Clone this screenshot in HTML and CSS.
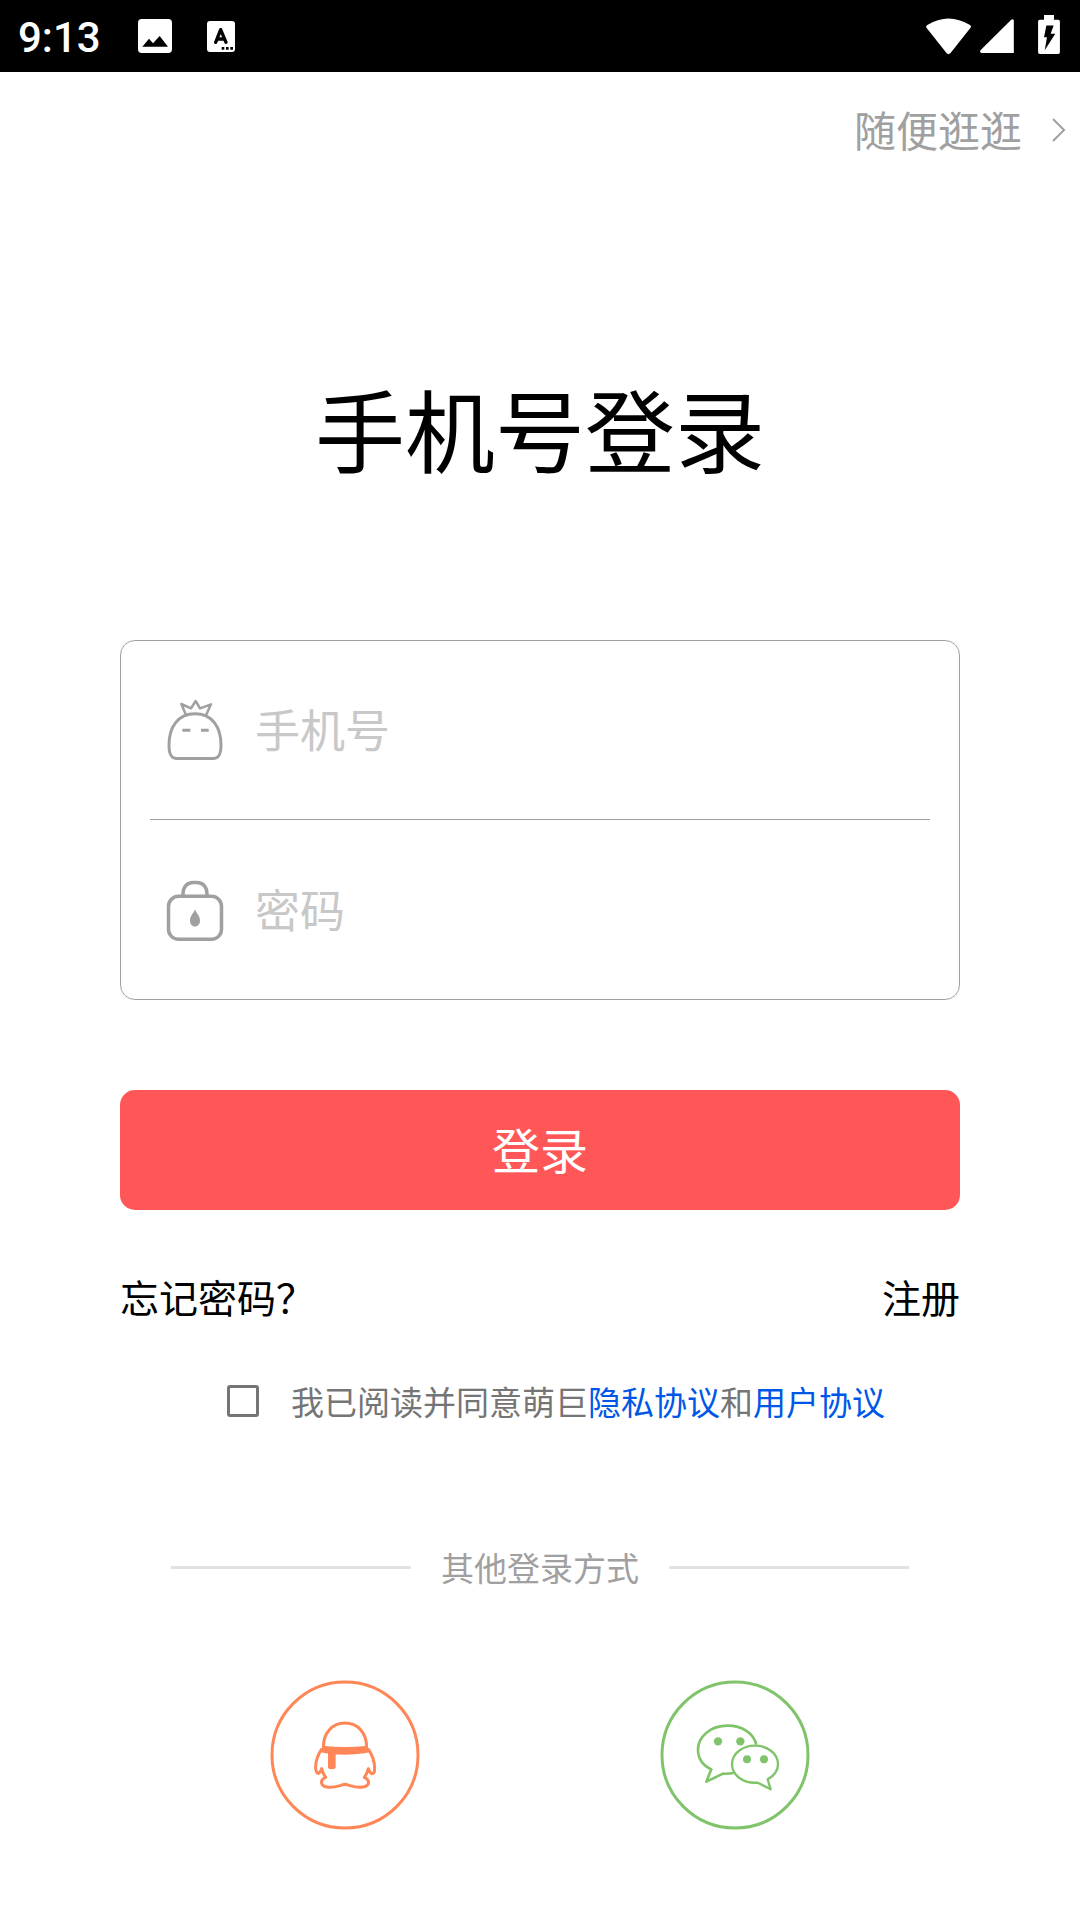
FILE: index.html
```html
<!DOCTYPE html>
<html lang="zh-CN">
<head>
<meta charset="utf-8">
<meta name="viewport" content="width=device-width, initial-scale=1">
<title>手机号登录</title>
<link rel="stylesheet" href="styles.css">
</head>
<body>
<header class="status">
  <span class="status-time">9:13</span>
  <svg class="status-photo" viewBox="0 0 102 102" aria-hidden="true"><rect width="102" height="102" rx="11" fill="#fff"/><path d="M13 83L33 59L45 73L65 51L90 83Z" fill="#000"/></svg>
  <svg class="status-input" viewBox="0 0 84 93" aria-hidden="true"><rect width="84" height="93" rx="9" fill="#fff"/><path d="M26 64L41 26L57 64M31 54H52" fill="none" stroke="#000" stroke-width="10" stroke-linecap="round" stroke-linejoin="round"/><path d="M44 78h8v8h-8zM57 78h8v8h-8zM70 78h8v8h-8z"/></svg>
  <svg class="status-wifi" viewBox="258 50 138 111" aria-hidden="true"><path d="M262 71Q325 32 390 71Q395 75 391 80L331 156Q325 161 320 156L260 80Q256 75 262 71Z" fill="#fff"/></svg>
  <svg class="status-signal" viewBox="420 59 102 103" aria-hidden="true"><path d="M514 61Q522 57 522 65V162H424Q418 159 421 154Z" fill="#fff"/></svg>
  <svg class="status-battery" viewBox="594 44 66 118" aria-hidden="true"><path d="M612 44h30v14h13q5 0 5 5v94q0 5-5 5h-56q-5 0-5-5v-94q0-5 5-5h13z" fill="#fff"/><path d="M619 76H641L632 101H646L614 151L621 111H612Z" fill="#000"/></svg>
</header>
<nav class="skip">
  <a class="skip-link" href="#"><span class="skip-text">随便逛逛</span>
    <svg class="skip-arrow" viewBox="0 0 14 26" aria-hidden="true"><path d="M1 2L12 13L1 24" fill="none" stroke="#a0a0a0" stroke-width="2"/></svg>
  </a>
</nav>
<main class="page">
  <h1 class="title">手机号登录</h1>
  <form class="login">
    <div class="card">
      <label class="field">
        <svg class="field-icon" viewBox="0 0 60 64" role="img" aria-label="手机号"><g fill="none" stroke="#a0a0a0" stroke-width="3" stroke-linejoin="round"><path d="M12 60.500C6 60.500 4 56 4 47C4 29 13 15.700 30 15.700C47 15.700 56 29 56 47C56 56 54 60.500 48 60.500Z"/><path d="M21 17L16.300 6L26 10.300L30.700 3L35 10.300L46 6.300L40.700 18" stroke-width="2.500"/><path d="M17.300 32.300H25.300M36 32.300H43.700"/></g></svg>
        <input class="field-input" type="tel" placeholder="手机号">
      </label>
      <label class="field">
        <svg class="field-icon" viewBox="0 0 60 64" role="img" aria-label="密码"><g fill="none" stroke="#a0a0a0" stroke-width="3.500"><rect x="3.500" y="18.300" width="53" height="43" rx="10"/><path d="M18 18V16C18 9 22 4.500 28 4.500H32C38 4.500 42 9 42 16V18"/></g><path d="M30 31.500C32 36 35 38 35 42.500C35 46 33 48.500 30 48.500C27 48.500 25 46 25 42.500C25 38 28 36 30 31.500Z" fill="#a0a0a0"/></svg>
        <input class="field-input" type="password" placeholder="密码">
      </label>
    </div>
    <button class="submit" type="submit">登录</button>
    <div class="links">
      <a href="#">忘记密码？</a>
      <a href="#">注册</a>
    </div>
    <div class="agree">
      <input class="agree-box" type="checkbox" id="agree">
      <label for="agree">我已阅读并同意萌巨<a class="agree-link" href="#">隐私协议</a>和<a class="agree-link" href="#">用户协议</a></label>
    </div>
  </form>
  <div class="divider">其他登录方式</div>
  <div class="socials">
    <button class="social" type="button" aria-label="QQ">
      <svg viewBox="45 30 450 450" aria-hidden="true"><g fill="none" stroke="#ff8656" stroke-width="9" stroke-linejoin="round"><circle cx="270" cy="255" r="219"/><path d="M205 232C205 188 232 159 270 159C308 159 335 188 335 232"/><path d="M201 236C186 258 181 280 182 296C183 306 187 311 191 310Q196 307 200 296C203 308 207 315 212 322C202 326 198 333 200 341C204 351 213 352 224 352C248 352 255 345 270 343C285 345 292 352 316 352C327 352 336 351 340 341C342 333 338 326 328 322C333 315 337 308 340 296Q344 307 350 311C356 311 359 304 359 296C359 280 354 258 339 236"/></g><path d="M203 227Q270 235 337 227L344 246Q336 248 328 250Q270 258 212 250L197 246ZM219 246H242V292Q242 297 236 297H224Q219 297 219 292Z" fill="#ff8656"/></svg>
    </button>
    <button class="social" type="button" aria-label="微信">
      <svg viewBox="29 30 450 450" aria-hidden="true"><g fill="none" stroke="#7fc46a" stroke-linejoin="round"><circle cx="254" cy="255" r="219" stroke-width="9"/><path stroke-width="8" d="M318 224C310 190 275 167 232 167C181 167 143 199 143 239C143 264 158 286 183 298L168 335L218 311Q233 312 250 309"/><path stroke-width="7" d="M352 328C372 317 383 300 383 283C383 251 352 227 314 227C276 227 245 251 245 283C245 314 276 341 322 338L361 358Z" stroke="none"/><path stroke-width="7" d="M352 328C372 317 383 300 383 283C383 251 352 227 314 227C276 227 245 251 245 283C245 314 276 341 322 338L361 358Z"/></g><g fill="#7fc46a"><circle cx="203" cy="214" r="12.500"/><circle cx="270" cy="214" r="12.500"/><circle cx="290" cy="268" r="12"/><circle cx="341" cy="268" r="12"/></g></svg>
    </button>
  </div>
</main>
</body>
</html>
```
FILE: styles.css
```css
* {
  box-sizing: border-box;
}

body {
  margin: 0;
  background: #fff;
  color: #000;
  font-family: "Noto Sans CJK SC", sans-serif;
}

a {
  color: inherit;
  text-decoration: none;
}

svg {
  display: block;
}

.status {
  display: flex;
  align-items: center;
  height: 72px;
  padding: 0 20px 0 18px;
  background: #000;
  color: #fff;
}

.status-time {
  font: 500 42px/70px Roboto, sans-serif;
  padding-top: 4px;
}

.status-photo {
  width: 34px;
  height: 34px;
  margin-left: 37px;
}

.status-input {
  width: 28px;
  height: 31px;
  margin-left: 35px;
}

.status-wifi {
  width: 46px;
  height: 37px;
  margin-left: auto;
}

.status-signal {
  width: 34px;
  height: 34px;
  margin-left: 8px;
}

.status-battery {
  width: 22px;
  height: 39px;
  margin-left: 24px;
  margin-bottom: 4px;
}

.skip {
  display: flex;
  justify-content: flex-end;
  height: 116px;
  padding-right: 14px;
}

.skip-link {
  display: flex;
  align-items: center;
  gap: 30px;
  color: #a0a0a0;
  font-size: 42px;
}

.skip-text {
  padding-bottom: 4px;
}

.skip-arrow {
  width: 14px;
  height: 26px;
}

.page {
  padding: 185px 120px 0;
}

.title {
  margin: 0;
  font-size: 90px;
  font-weight: 400;
  line-height: 108px;
  text-align: center;
}

.card {
  margin-top: 159px;
  padding: 0 29px;
  border: 1px solid #a0a0a0;
  border-radius: 15px;
}

.field {
  display: flex;
  align-items: center;
  gap: 30px;
  height: 178px;
  padding-left: 15px;
}

.field + .field {
  height: 180px;
  border-top: 1px solid #a0a0a0;
}

.field-icon {
  width: 60px;
  height: 64px;
}

.field-input {
  flex: 1;
  min-width: 0;
  height: 80px;
  padding: 0 0 3px;
  border: 0;
  outline: 0;
  background: none;
  color: #000;
  font: inherit;
  font-size: 45px;
}

.field-input::placeholder {
  color: #c8c8c8;
  opacity: 1;
}

.submit {
  display: block;
  width: 100%;
  height: 120px;
  margin-top: 90px;
  padding: 0 0 4px;
  border: 0;
  border-radius: 15px;
  background: #ff5757;
  color: #fff;
  font: inherit;
  font-size: 48px;
}

.links {
  display: flex;
  justify-content: space-between;
  margin-top: 56px;
  font-size: 39px;
  line-height: 60px;
}

.agree {
  display: flex;
  align-items: center;
  justify-content: center;
  gap: 32px;
  margin-top: 50px;
  padding-left: 32px;
  color: #757575;
  font-size: 33px;
  line-height: 50px;
}

.agree-box {
  appearance: none;
  width: 32px;
  height: 32px;
  margin: 0;
  border: 3px solid #757575;
  border-radius: 3px;
}

.agree-box:checked {
  background: #757575;
}

.agree-link {
  color: #0057e7;
}

.divider {
  display: flex;
  align-items: center;
  gap: 30px;
  margin-top: 116px;
  padding: 0 51px;
  color: #a0a0a0;
  font-size: 33px;
  line-height: 50px;
}

.divider::before,
.divider::after {
  content: "";
  flex: 1;
  height: 3px;
  background: #e2e2e2;
}

.socials {
  display: flex;
  justify-content: center;
  gap: 240px;
  margin-top: 88px;
}

.social {
  width: 150px;
  height: 150px;
  padding: 0;
  border: 0;
  border-radius: 50%;
  background: none;
}
```
